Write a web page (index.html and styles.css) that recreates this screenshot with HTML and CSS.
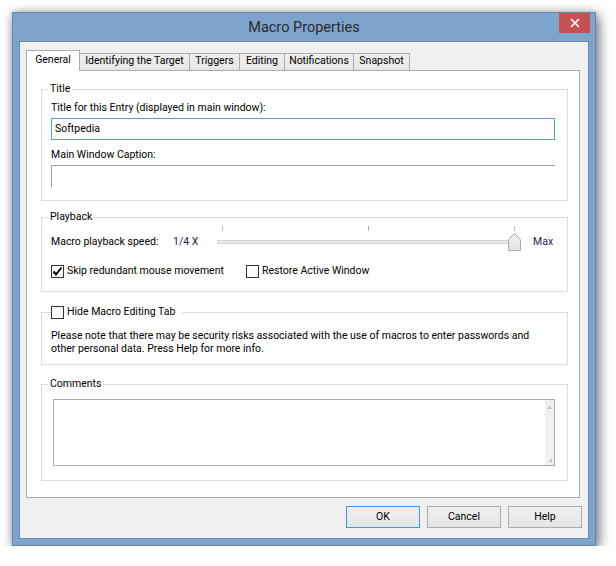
FILE: index.html
```html
<!DOCTYPE html>
<html lang="en">
<head>
    <meta charset="UTF-8">
    <title>Macro Properties</title>
    <link rel="stylesheet" href="styles.css">
</head>
<body>
    <div class="window">
        <div class="titlebar">
            <span class="title">Macro Properties</span>
            <div class="close">
                <svg width="10" height="10" viewBox="0 0 10 10"><path d="M1 1 L9 9 M9 1 L1 9" stroke="#fff" stroke-width="1.7"/></svg>
            </div>
        </div>

        <div class="client">
            <div class="tabs">
                <div class="tab tab-general active">General</div>
                <div class="tab tab-target">Identifying the Target</div>
                <div class="tab tab-triggers">Triggers</div>
                <div class="tab tab-editing">Editing</div>
                <div class="tab tab-notify">Notifications</div>
                <div class="tab tab-snapshot">Snapshot</div>
            </div>

            <div class="panel">
                <fieldset class="group group-title">
                    <legend>Title</legend>
                    <div class="field-label">Title for this Entry (displayed in main window):</div>
                    <div class="textbox focused">Softpedia</div>
                    <div class="field-label caption-label">Main Window Caption:</div>
                    <div class="textbox sunken"></div>
                </fieldset>

                <fieldset class="group group-playback">
                    <legend>Playback</legend>
                    <div class="slider-row">
                        <span class="slider-label">Macro playback speed:</span>
                        <span class="speed">1/4 X</span>
                        <svg class="slider" width="304" height="28" viewBox="0 0 304 28">
                            <rect x="0.5" y="15.5" width="300" height="3" fill="#e7eaea" stroke="#d6d6d6"/>
                            <line x1="5.5" y1="1" x2="5.5" y2="6" stroke="#b4b4b4"/>
                            <line x1="151.5" y1="1" x2="151.5" y2="6" stroke="#b4b4b4"/>
                            <line x1="297.5" y1="1" x2="297.5" y2="7" stroke="#b4b4b4" stroke-dasharray="2 1"/>
                            <defs>
                                <linearGradient id="thumb" x1="0" y1="0" x2="0" y2="1">
                                    <stop offset="0" stop-color="#f2f2f2"/>
                                    <stop offset="1" stop-color="#e3e3e3"/>
                                </linearGradient>
                            </defs>
                            <polygon points="291.5,14.5 297.5,8.5 303.5,14.5 303.5,25.5 291.5,25.5" fill="url(#thumb)" stroke="#acacac"/>
                        </svg>
                        <span class="max">Max</span>
                    </div>
                    <div class="check-row">
                        <label class="check check-skip">
                            <span class="box"><svg width="11" height="11" viewBox="0 0 11 11"><path d="M1.5 5.5 L4 8.5 L9.5 1.5" fill="none" stroke="#000" stroke-width="2"/></svg></span>
                            Skip redundant mouse movement
                        </label>
                        <label class="check">
                            <span class="box"></span>
                            Restore Active Window
                        </label>
                    </div>
                </fieldset>

                <fieldset class="group group-hide">
                    <legend class="check-legend">
                        <span class="check">
                            <span class="box"></span>
                            Hide Macro Editing Tab
                        </span>
                    </legend>
                    <p class="note">Please note that there may be security risks associated with the use of macros to enter passwords and other personal data. Press Help for more info.</p>
                </fieldset>

                <fieldset class="group group-comments">
                    <legend>Comments</legend>
                    <div class="memo">
                        <div class="scrollbar">
                            <svg width="5" height="4" viewBox="0 0 5 4"><path d="M0 4 L2.5 0.5 L5 4 Z" fill="#c2c2c2"/></svg>
                            <svg width="6" height="6" viewBox="0 0 6 6"><path d="M5 1 V5 H1 Z" fill="#c8c8c8"/></svg>
                        </div>
                    </div>
                </fieldset>
            </div>

            <div class="buttons">
                <button class="btn default">OK</button>
                <button class="btn">Cancel</button>
                <button class="btn">Help</button>
            </div>
        </div>
    </div>
</body>
</html>
```

FILE: styles.css
```css
* {
    box-sizing: border-box;
}

body {
    margin: 0;
    padding: 12px 0 0 12px;
    background: #fff;
    font-family: Roboto, "Liberation Sans", sans-serif;
    font-size: 10.5px;
    color: #000;
}

/* Window frame */
.window {
    width: 584px;
    height: 534px;
    border: 1px solid #6687ad;
    background: #7ca4cd;
    padding: 0 7px 7px;
    display: flex;
    flex-direction: column;
    box-shadow: 3px 4px 12px rgba(0, 0, 0, 0.5), 0 0 8px rgba(0, 0, 0, 0.2);
}

.titlebar {
    height: 29px;
    margin: 0 -7px;
    display: grid;
    grid-template-columns: 1fr auto 1fr;
}

.title {
    grid-column: 2;
    align-self: center;
    font-size: 14.5px;
    color: #2b2b2b;
}

.close {
    grid-column: 3;
    justify-self: end;
    width: 31px;
    height: 20px;
    margin-right: 5px;
    background: #c75050;
    display: flex;
    align-items: center;
    justify-content: center;
}

.client {
    flex: 1;
    background: #f0f0f0;
    padding: 8px 8px 10px 6px;
    display: flex;
    flex-direction: column;
    box-shadow: 0 0 0 1px #6b8db5;
}

/* Tabs */
.tabs {
    display: flex;
    align-items: flex-end;
    height: 20px;
}

.tab {
    height: 17px;
    margin-left: -1px;
    border: 1px solid #acacac;
    border-bottom: none;
    background: linear-gradient(#f0f0f0, #e5e5e5);
    text-align: center;
    line-height: 13px;
    white-space: nowrap;
}

.tab.active {
    position: relative;
    z-index: 1;
    height: 21px;
    margin-bottom: -1px;
    background: #fff;
    line-height: 18px;
}

.tab-general { width: 54px; margin-left: 0; }
.tab-target { width: 111px; }
.tab-triggers { width: 51px; }
.tab-editing { width: 46px; }
.tab-notify { width: 70px; }
.tab-snapshot { width: 57px; }

.panel {
    height: 428px;
    background: #fff;
    border: 1px solid #acacac;
    padding: 10px 11px 15px 14px;
}

/* Group boxes */
.group {
    margin: 0;
    min-width: 0;
    border: 1px solid #dcdcdc;
    padding: 0 12px 0 9px;
}

.group legend {
    margin-left: -3px;
    padding: 0 2px;
    line-height: 16px;
}

.group-title {
    padding-top: 3px;
    padding-bottom: 13px;
}

.field-label {
    line-height: 16px;
}

.caption-label {
    margin-top: 7px;
}

.textbox {
    height: 22px;
    margin-top: 2px;
    padding: 0 3px;
    line-height: 20px;
    background: #fff;
    border: 1px solid #569de5;
}

.textbox.sunken {
    border: none;
    border-top: 1px solid #a0a0a0;
    border-left: 1px solid #a0a0a0;
}

.group-playback {
    margin-top: 8px;
    padding-bottom: 12px;
}

.slider-row {
    display: flex;
    height: 28px;
    line-height: 16px;
}

.slider-label {
    width: 122px;
    padding-top: 9px;
}

.speed {
    width: 44px;
    padding-top: 9px;
    color: #1e1e46;
}

.slider {
    display: block;
}

.max {
    margin-left: 12px;
    padding-top: 9px;
    color: #1e1e46;
}

.check-row {
    display: flex;
    margin-top: 10px;
    line-height: 16px;
}

.check {
    display: flex;
    align-items: center;
}

.check-skip {
    width: 195px;
}

.box {
    width: 13px;
    height: 13px;
    margin-right: 3px;
    border: 1px solid #333;
    background: #fff;
    display: flex;
    align-items: center;
    justify-content: center;
}

.group-hide {
    margin-top: 12px;
    padding-top: 9px;
    padding-bottom: 9px;
}

.group legend.check-legend {
    margin-left: 0;
    padding: 0 7px 0 0;
}

.note {
    margin: 0;
    line-height: 13px;
}

.group-comments {
    margin-top: 11px;
    padding-top: 7px;
    padding-bottom: 14px;
}

.memo {
    height: 67px;
    margin-left: 2px;
    border: 1px solid #abadb3;
    background: #fff;
    display: flex;
    justify-content: flex-end;
}

.scrollbar {
    width: 9px;
    background: #f0f0f0;
    padding: 5px 0 2px;
    display: flex;
    flex-direction: column;
    justify-content: space-between;
    align-items: center;
}

.scrollbar svg {
    display: block;
}

/* Dialog buttons */
.buttons {
    display: flex;
    justify-content: flex-end;
    gap: 7px;
    margin: 8px -2px 0 0;
}

.btn {
    width: 74px;
    height: 22px;
    padding: 0;
    border: 1px solid #acacac;
    background: linear-gradient(#f0f0f0, #e5e5e5);
    font: inherit;
    color: #000;
    line-height: 20px;
}

.btn.default {
    border-color: #3399ff;
}
```
